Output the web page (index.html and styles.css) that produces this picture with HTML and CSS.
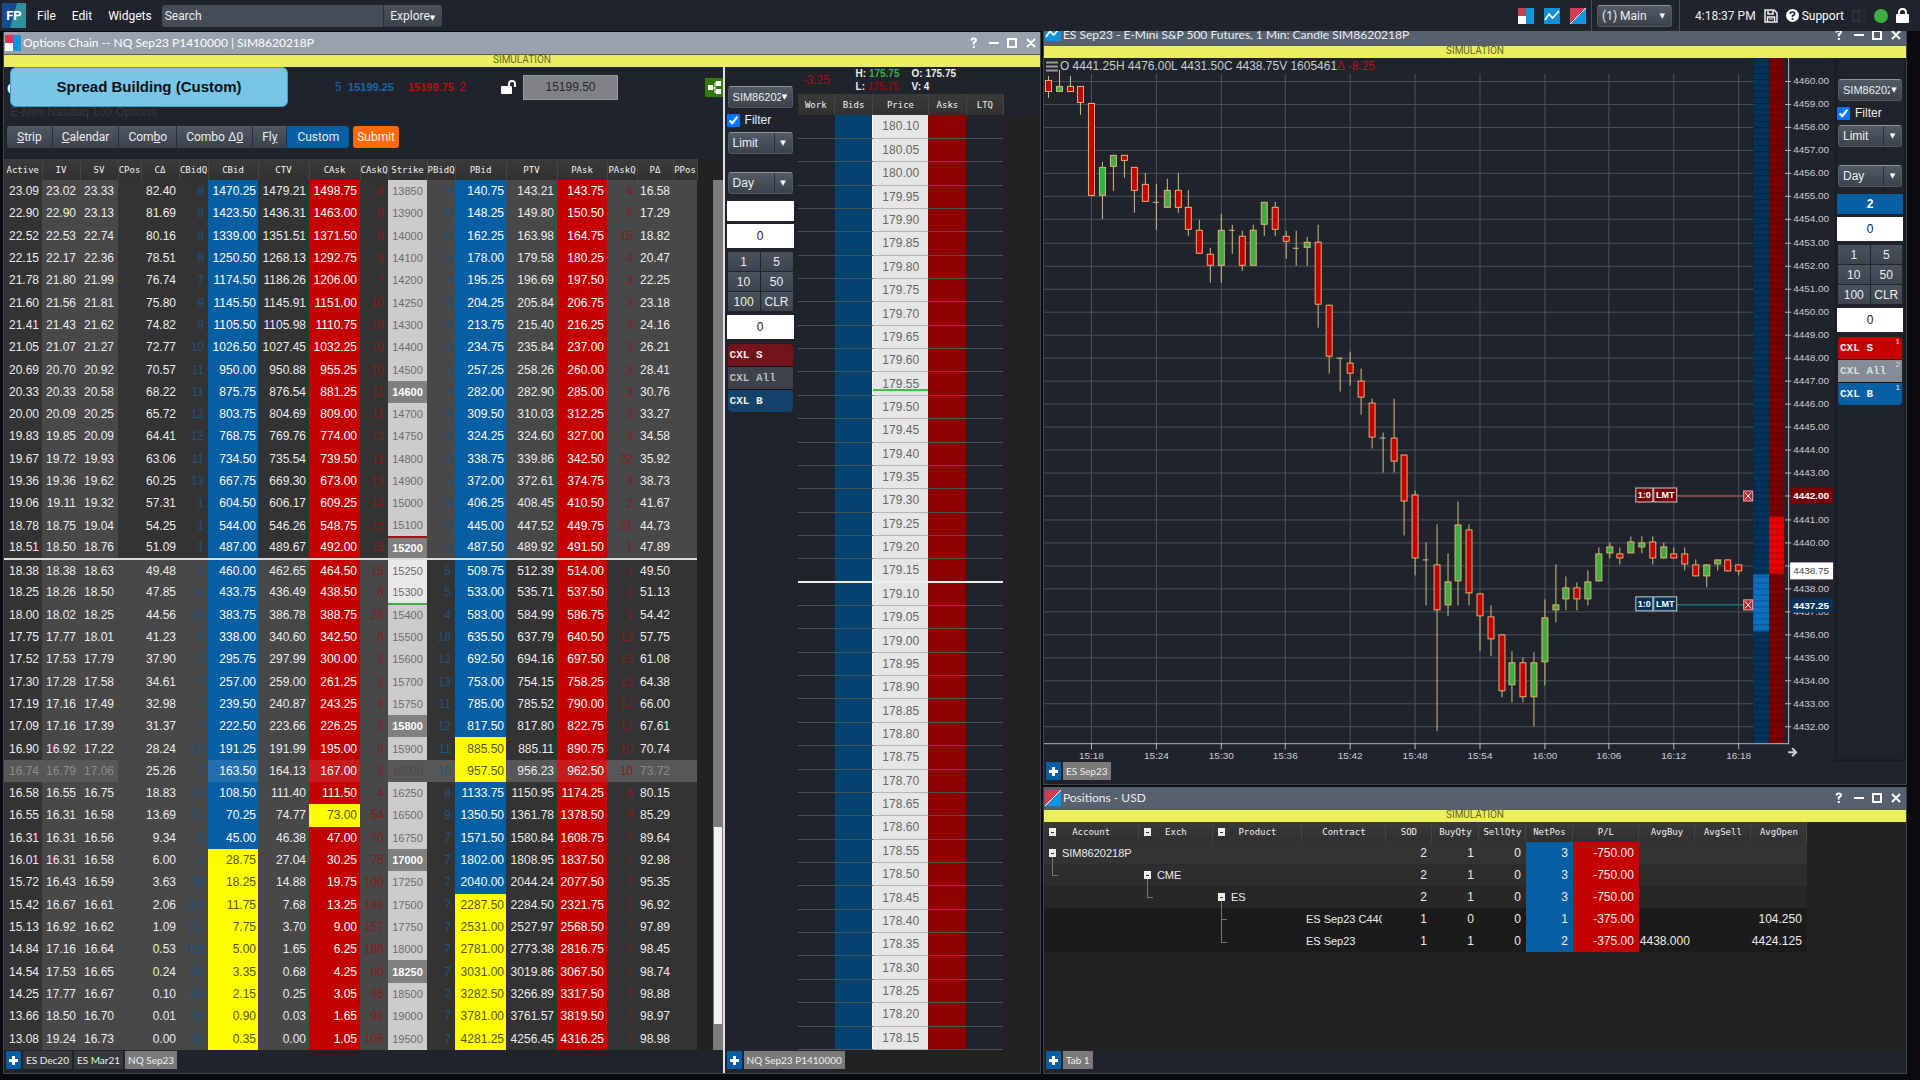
FILE: index.html
```html
<!DOCTYPE html>
<html lang="en">
<head>
<meta charset="utf-8">
<title>Trading workspace</title>
<link rel="stylesheet" href="styles.css">
</head>
<body>
<svg class="defs" width="0" height="0" aria-hidden="true">
  <symbol id="i-chain" viewBox="0 0 16 16"><path fill="#fff" d="M0 0h16v16H0z"/><path fill="#d33b52" d="M0 0h8v8H0z"/><path fill="#0f96dc" d="M8 0h8v16H8z"/></symbol>
  <symbol id="i-chart" viewBox="0 0 16 16"><path fill="#0f8fd6" d="M0 0h16v16H0z"/><path fill="none" stroke="#fff" stroke-width="1.6" d="M1 12l4-6 3.500 4L15 3"/></symbol>
  <symbol id="i-pos" viewBox="0 0 16 16"><path fill="#0f96dc" d="M0 0h16v16H0z"/><path fill="#d33b52" d="M0 0h16L0 16z"/><path stroke="#fff" d="M0 16L16 0"/></symbol>
  <symbol id="i-win" viewBox="0 0 66 12"><path fill="none" stroke="#fff" stroke-width="2" d="M1.500 3.500q0-2 2.300-2t2.200 1.800q0 1.200-2.200 2.200v2M3.800 9v2M19 6h10M38 2h8v8h-8zM57 2l8 8M65 2l-8 8"/></symbol>
</svg>

<header class="topbar">
  <svg class="logo" viewBox="0 0 24 25"><path fill="#174a92" d="M0 0h24v25H0z"/><path fill="#2f8f9c" d="M15 0h9v25H8z"/><text x="12" y="17" text-anchor="middle">FP</text></svg>
  <nav class="menu"><a href="#">File</a><a href="#">Edit</a><a href="#">Widgets</a></nav>
  <div class="search"><input type="text" placeholder="Search" aria-label="Search"><button type="button">Explore<span class="caret">▼</span></button></div>
  <div class="quick">
    <svg class="ico16"><use href="#i-chain"/></svg><svg class="ico16"><use href="#i-chart"/></svg><svg class="ico16"><use href="#i-pos"/></svg>
  </div>
  <div class="ws"><div class="pick main"><select aria-label="Workspace"><option>(1) Main</option></select><span class="caret">▼</span></div></div>
  <div class="status">
    <time>4:18:37 PM</time>
    <svg width="14" height="14" viewBox="0 0 14 14"><path fill="none" stroke="#eee" stroke-width="1.500" d="M1 1h9l3 3v9H1zM4 1v4h5V1M3.500 13V8h7v5"/><path stroke="#eee" d="M5 10h4"/></svg>
    <a href="#" class="support"><svg width="13" height="13" viewBox="0 0 13 13"><circle cx="6.500" cy="6.500" r="6.500" fill="#fff"/><path fill="none" stroke="#20232b" stroke-width="1.700" d="M4.300 5q0-2 2.200-2t2.200 1.800q0 1-2.200 2V8M6.500 9v1.700"/></svg>Support</a>
    <svg width="14" height="14" viewBox="0 0 14 14"><path fill="#2c2f33" d="M0 1l8-1v14l-8-1z"/><path fill="none" stroke="#2c2f33" d="M8 2h5v10H8"/><path stroke="#1d2025" stroke-width="1.500" d="M2 4l4 6M6 4l-4 6"/></svg>
    <svg width="14" height="14" viewBox="0 0 14 14"><circle cx="7" cy="7" r="7" fill="#3cb043"/></svg>
    <svg width="13" height="15" viewBox="0 0 13 15"><rect y="6" width="13" height="9" rx="1" fill="#fff"/><path fill="none" stroke="#fff" stroke-width="2" d="M3 7V4.500q0-3.500 3.500-3.500T10 4.500V7"/></svg>
  </div>
</header>

<main class="desk">
  <section class="panel left">
    <div class="title light"><svg class="ico16"><use href="#i-chain"/></svg><h2>Options Chain -- NQ Sep23 P1410000 | SIM8620218P</h2><svg class="win"><use href="#i-win"/></svg></div>
    <div class="sim">SIMULATION</div>
    <div class="split">
      <div class="chain">
        <div class="chainhead">
          <div class="quoteline">
            <span class="big">C</span>
            <span class="callout">Spread Building (Custom)</span>
            <span class="bid"><i>5</i> <b>15199.25</b></span>
            <span class="ask"><b>15199.75</b> <i>2</i></span>
            <svg class="unlock" width="16" height="14" viewBox="0 0 16 14"><rect y="6" width="11" height="8" rx="1" fill="#fff"/><path fill="none" stroke="#fff" stroke-width="2" d="M8 7V4q0-3 3-3t3 3v3"/></svg>
            <input class="last" type="text" value="15199.50" aria-label="Underlying price">
            <svg class="link" width="18" height="19" viewBox="0 0 18 19"><path fill="#2f7a0b" d="M0 0h18v19H0z"/><path stroke="#fff" d="M5 10h5M10 5v10M10 5h3M10 14h3"/><path fill="#fff" d="M3 7h5v5H3zM11 3h5v5h-5zM11 11h5v5h-5z"/></svg>
          </div>
          <div class="desc">E-Mini Nasdaq 100 Options</div>
          <div class="modes">
            <button type="button"><u>S</u>trip</button><button type="button"><u>C</u>alendar</button><button type="button">Com<u>b</u>o</button><button type="button">Combo Δ<u>0</u></button><button type="button">Fl<u>y</u></button><button type="button" class="on">Custom</button><button type="button" class="submit">Submit</button>
          </div>
        </div>
        <div class="gridwrap">
          <table class="options" id="options"></table>
          <div class="scroll"><div class="thumb"></div></div>
        </div>
        <div class="tabs"><button type="button" class="add" aria-label="Add tab"></button><button type="button">ES Dec20</button><button type="button">ES Mar21</button><button type="button" class="cur">NQ Sep23</button></div>
      </div>
      <div class="dom">
        <div class="dombody">
          <div class="ticket" data-qty="" data-live=""></div>
          <div class="ladderwrap">
            <div class="stats"><span class="chg">-3.25</span><span>H: <em class="up">175.75</em></span><span>O: 175.75</span><span>L: <em class="dn">175.75</em></span><span>V: 4</span></div>
            <table class="ladder" id="ladder"></table>
          </div>
        </div>
        <div class="tabs"><button type="button" class="add" aria-label="Add tab"></button><button type="button" class="cur">NQ Sep23 P1410000</button></div>
      </div>
    </div>
  </section>

  <div class="right">
    <section class="panel chartp">
      <div class="title cut"><svg class="ico16"><use href="#i-chart"/></svg><h2>ES Sep23 - E-Mini S&amp;P 500 Futures, 1 Min: Candle SIM8620218P</h2><svg class="win"><use href="#i-win"/></svg></div>
      <div class="sim">SIMULATION</div>
      <div class="chartbody">
        <svg id="chart" class="chart" viewBox="1044 58 792 703" role="img" aria-label="ES Sep23 candles"></svg>
        <div class="ticket live" data-qty="2" data-live="1"></div>
      </div>
      <div class="tabs"><button type="button" class="add" aria-label="Add tab"></button><button type="button" class="cur">ES Sep23</button></div>
    </section>
    <section class="panel posp">
      <div class="title"><svg class="ico16"><use href="#i-pos"/></svg><h2>Positions - USD</h2><svg class="win"><use href="#i-win"/></svg></div>
      <div class="sim">SIMULATION</div>
      <div class="posbody">
        <table class="positions">
          <colgroup><col class="c95"><col class="c74"><col class="c89"><col class="c84"><col class="c46"><col class="c47"><col class="c47"><col class="c47"><col class="c66"><col class="c56"><col class="c56"><col class="c56"></colgroup>
          <thead><tr><th><i class="tg"></i>Account</th><th><i class="tg"></i>Exch</th><th><i class="tg"></i>Product</th><th>Contract</th><th>SOD</th><th>BuyQty</th><th>SellQty</th><th>NetPos</th><th>P/L</th><th>AvgBuy</th><th>AvgSell</th><th>AvgOpen</th></tr></thead>
          <tbody>
            <tr class="l1"><td class="t" colspan="2"><i class="tg tree"></i>SIM8620218P</td><td></td><td></td><td>2</td><td>1</td><td>0</td><td class="net">3</td><td class="pl">-750.00</td><td></td><td></td><td></td></tr>
            <tr class="l2"><td></td><td class="t"><i class="tg tree"></i>CME</td><td></td><td></td><td>2</td><td>1</td><td>0</td><td class="net">3</td><td class="pl">-750.00</td><td></td><td></td><td></td></tr>
            <tr class="l3"><td></td><td></td><td class="t"><i class="tg tree two"></i>ES</td><td></td><td>2</td><td>1</td><td>0</td><td class="net">3</td><td class="pl">-750.00</td><td></td><td></td><td></td></tr>
            <tr class="l4"><td></td><td></td><td></td><td class="con"><div>ES Sep23 C4400</div></td><td>1</td><td>0</td><td>0</td><td class="net">1</td><td class="pl">-375.00</td><td></td><td></td><td>104.250</td></tr>
            <tr class="l4"><td></td><td></td><td></td><td class="con"><div>ES Sep23</div></td><td>1</td><td>1</td><td>0</td><td class="net">2</td><td class="pl">-375.00</td><td>4438.000</td><td></td><td>4424.125</td></tr>
          </tbody>
        </table>
      </div>
      <div class="tabs"><button type="button" class="add" aria-label="Add tab"></button><button type="button" class="cur">Tab 1</button></div>
    </section>
  </div>
</main>
<script src="app.js"></script>
</body>
</html>
```
FILE: styles.css
```css
* { box-sizing: border-box; }
body { margin: 0; min-height: 100vh; display: flex; flex-direction: column; background: #0a0b0e; color: #eee; font: 12px/16px Roboto, "Liberation Sans", sans-serif; }
button, input, select { font: inherit; color: inherit; margin: 0; border-radius: 0; }
button { cursor: pointer; }
h2 { margin: 0; }
.defs { position: absolute; }
.caret { font: 7px/10px "DejaVu Sans", sans-serif; color: #fff; }
.ico16 { width: 16px; height: 16px; flex: none; }

.topbar { height: 31px; display: flex; align-items: center; background: #20232b; padding-left: 2px; padding-right: 11px; }
.logo { width: 24px; height: 25px; }
.logo text { font: bold 13px Roboto, sans-serif; fill: #fff; }
.menu { display: flex; gap: 16px; padding: 0 10px 0 11px; }
.menu a, .support { color: #fff; text-decoration: none; }
.search { display: flex; width: 280px; height: 22px; }
.search input { flex: 1; min-width: 0; border: 0; padding: 0 3px; background: #454b57; border-radius: 3px 0 0 3px; }
.search input::placeholder { color: #eee; opacity: 1; }
.search button { width: 59px; padding: 0; border: 0; border-left: 1px solid #2a2e36; background: linear-gradient(#4a515d, #3c424d); border-radius: 0 3px 3px 0; }
.quick { margin-left: auto; display: flex; gap: 10px; padding-right: 5px; }
.ws { height: 31px; display: flex; align-items: center; padding: 0 7px 0 5px; border: solid #4a4d54; border-width: 0 1px; }
.pick { display: grid; grid-template-columns: 1fr 18px; align-items: center; height: 22px; background: linear-gradient(#525a66, #3b424d); border: 1px solid #4f5763; border-top-color: #8b929c; border-radius: 3px; overflow: hidden; }
.pick select { grid-area: 1 / 1 / 2 / 3; width: 100%; height: 20px; appearance: none; background: none; border: 0; padding: 0 16px 0 4px; outline: 0; }
.pick .caret { grid-area: 1 / 2; text-align: center; pointer-events: none; }
.pick.acct { grid-template-columns: 1fr 14px; font-size: 11px; }
.pick.acct select { padding: 0 11px 0 4px; }
.pick.sep .caret { border-left: 1px solid #2b2f37; line-height: 20px; }
.main { width: 75px; }
.status { display: flex; align-items: center; gap: 8px; padding-left: 15px; }
.support { display: flex; align-items: center; gap: 3px; }

.desk { flex: 1; display: flex; gap: 2px; padding: 0 13px 6px 3px; }
.panel { display: flex; flex-direction: column; background: #20232b; border: 1px solid #3f434b; border-top: 0; }
.left { flex: 1037 1 0; margin-top: 1px; min-width: 0; }
.right { flex: 865 1 0; display: flex; flex-direction: column; gap: 2px; min-width: 0; }
.title { height: 22px; display: flex; align-items: center; gap: 2px; padding: 0 5px 0 1px; background: #56606e; }
.title h2 { flex: 1; font: 12px/20px Lato, sans-serif; white-space: nowrap; }
.left .title { padding-right: 4px; }
.left .title h2 { color: #fff; }
.light { background: #98a1ad; }
.win { width: 66px; height: 12px; overflow: visible; }
.title.cut { height: 14px; align-items: flex-end; overflow: hidden; }
.cut .ico16 { margin-bottom: 4px; }
.cut .win { margin-bottom: 4px; }
.sim { height: 13px; border: solid #57604a; border-width: 1px 0 0; background: #ebef5d; color: #66672f; font: 10px/10px Roboto, sans-serif; text-align: center; }

.split { flex: 1; display: flex; }
.chain { flex: 720 1 0; min-width: 0; display: flex; flex-direction: column; border-right: 2px solid #e0e0e0; }
.dom { flex: 316 1 0; min-width: 0; display: flex; flex-direction: column; }
.chainhead { height: 92px; padding-left: 3px; }
.quoteline { display: grid; grid-template-columns: 328px 70px 96px 22px 95px 1fr; height: 38px; align-items: center; font-family: "Liberation Sans", sans-serif; }
.big { grid-area: 1 / 1; font: bold 16px Lato, sans-serif; color: #fff; }
.callout { grid-area: 1 / 1; width: 278px; height: 40px; margin-left: 3px; border: 1px solid #31a3d6; border-radius: 6px; background: #78c5e8; color: #0b1015; font: bold 15px/38px "Liberation Sans", sans-serif; text-align: center; z-index: 1; }
.quoteline i { font-style: normal; margin-right: 3px; }
.quoteline b { font-size: 11px; }
.bid { color: #1565ab; }
.ask { color: #c40a0a; padding-left: 3px; }
.ask i { margin-left: 2px; }
.last { height: 25px; border: 1px solid #9a9ca0; background: #808287; color: #26282c; text-align: center; font: 12px "Liberation Sans", sans-serif; }
.link { justify-self: end; }
.desc { height: 14px; padding-left: 3px; color: #35383e; font: 12px/14px "Liberation Sans", sans-serif; margin: 0 0 7px; }
.modes { display: flex; height: 22px; }
.modes button { padding: 0 9px; border: 0; border-right: 1px solid #2c3038; background: linear-gradient(#505864, #3a414c); white-space: nowrap; }
.modes button:first-child { border-radius: 3px 0 0 3px; padding: 0 10px; }
.modes .on { background: #065ea3; border-radius: 0 3px 3px 0; border: 0; padding: 0 10px; }
.modes .submit { background: #ff6a00; border: 0; border-radius: 3px; margin-left: 4px; padding: 0 4px; }

.gridwrap { flex: 1; display: flex; background: #222; }
.options { flex: 1; table-layout: fixed; width: 100%; border-collapse: collapse; margin-right: 15px; }
table { font: 12px/14px "Liberation Sans", sans-serif; }
th { height: 21px; padding: 0; background: linear-gradient(#3a3a3a, #303030); border-right: 1px solid #444; font: 9px/12px "DejaVu Sans Mono", monospace; color: #f2f2f2; white-space: nowrap; }
.options th { overflow: hidden; }
.options td { padding: 0 3px 0 0; height: 22px; text-align: right; background: #333; }
.options .up-row .p, .options .dn-row .c, .options .v { background: #484848; }
.options td.q { padding-right: 4px; }
.options td.v { padding-right: 4px; }
td.cq, td.pq { color: #21527e; }
td.ca, td.pa { color: #861c1f; }
.options td.b { background: #065ea3; color: #fff; padding-right: 2px; }
.options td.a { background: #c40000; color: #fff; }
.options td.y { background: #ff0; color: #555500; }
.options td.k { background: #ccc; color: #6b6b6b; text-align: center; padding: 0; font-size: 11px; }
.options td.k.w { background: #e9e9e9; }
.options td.k.m { background: #808080; color: #fff; font-weight: bold; }
.options tr.div td { border-bottom: 2px solid #ddd; }
.options tr.div td.k { border-top: 2px solid #9b1616; }
.options td.k.g { border-bottom: 2px solid #45a845; }
.options tr.hl td { background: #575757; }
.options tr.hl td.b { background: #236eac; }
.options tr.hl td.a { background: #c81c1c; }
.options tr.hl td.y { background: #ff0; }
.options tr.hl td.dim { color: #8c8c8c; }
.options tr.hl td.k { color: #4a4a4a; }
.scroll { width: 10px; margin-top: 21px; background: #7b7b7b; padding: 0 1px; display: grid; grid-template-rows: 647fr 197fr 26fr; }
.thumb { grid-row: 2; background: #f2f2f2; }

.tabs { height: 23px; display: flex; gap: 2px; padding: 1px 0 4px 2px; }
.tabs button { height: 18px; padding: 0 3px; border: 0; background: #36383b; font: 10px/18px Lato, sans-serif; white-space: nowrap; }
.tabs .cur { background: #7a7a7a; }
.tabs .add { width: 15px; padding: 0; background: linear-gradient(#fff, #fff) center / 9px 3px no-repeat, linear-gradient(#fff, #fff) center / 3px 9px no-repeat, #065ea3; }

.dombody { flex: 1; display: flex; }
.ticket { width: 73px; flex: none; padding: 19px 4px 0 2px; font-family: "Liberation Sans", sans-serif; display: flex; flex-direction: column; }
.ticket.live { padding-top: 21px; width: 71px; height: 703px; padding-right: 3px; box-shadow: inset 0 0 3px #0c0d10; }
.ticket .pick { margin: 0 1px; }
.check { display: flex; align-items: center; gap: 5px; height: 12px; margin: 6px 0; }
.check input { width: 13px; height: 13px; }
.pick.tif { margin-top: 18px; }
.ticket > input { width: 100%; height: 24px; border: 0; background: #fff; color: #222; text-align: center; margin-bottom: 4px; }
.ticket > input.pos { height: 20px; margin: 7px 0 3px; }
.live > input.pos { background: #065ea3; color: #fff; font-weight: bold; }
.keys { display: grid; grid-template-columns: 1fr 1fr; grid-auto-rows: 19px; gap: 1px; margin: 0 1px 4px; }
.keys button { border: 0; padding: 0; background: linear-gradient(#49515d, #3d444f); }
.cxl { display: grid; grid-auto-rows: 22px; gap: 1px; margin: 1px 1px 0; border-radius: 4px; overflow: hidden; background: #101216; }
.cxl button { display: flex; justify-content: space-between; border: 0; padding: 0 2px; font: bold 11px/22px "Liberation Mono", monospace; text-align: left; white-space: pre; }
.cxl sup { font: 8px/10px "Liberation Sans", sans-serif; }
.cxl .s { background: #73131a; } .cxl .n { background: #3d424b; color: #bbb; } .cxl .y { background: #13436b; }
.live .s { background: #c40000; } .live .n { background: #848c98; color: #ddd; } .live .y { background: #065ea3; }

.ladderwrap { flex: 1; display: flex; flex-direction: column; padding-right: 2px; }
.stats { height: 27px; display: grid; grid-template-columns: 58px 56px 1fr; grid-template-rows: 13px 13px; align-items: center; font: bold 10px/13px "Liberation Sans", sans-serif; white-space: nowrap; }
.stats em { font-style: normal; }
.stats .up { color: #3fae47; } .stats .dn { color: #8c0a10; }
.stats .chg { grid-row: 1 / 3; padding-left: 5px; font: 12px "Liberation Sans", sans-serif; color: #a30d14; }
.ladder { flex: 1; table-layout: fixed; border-collapse: collapse; margin-right: 34px; box-shadow: 34px 21px 0 #222; }
.ladder td { padding: 0; height: 22px; text-align: center; border-bottom: 1px solid #4b5058; }
.ladder .lb { background: #04426f; } .ladder .la { background: #8f0000; }
.ladder .lp { background: #e6e6e6; color: #666; border-bottom-color: #b5b5b5; border-left: 1px solid #fff; }
.ladder .lt .lp { background: linear-gradient(#3fc347, #3fc347) 0 17px / 100% 2px no-repeat #e6e6e6; }
.ladder .mid td { border-bottom: 2px solid #eee; }

.chartbody { display: flex; align-items: flex-start; }
.chart { flex: 1; min-width: 0; display: block; }
.chart text { font: 10px "Liberation Sans", sans-serif; fill: #c9ccd2; }
.chart .ohlc { font-size: 12px; }
.chart .red { fill: #b0141b; }
.chart .hot { fill: #fff; font-weight: bold; }
.chart .now { fill: #444; }
.chart .ord { fill: #fff; font-weight: bold; font-size: 9px; }

.posp { flex: 1; }
.posbody { flex: 1; background: #222; }
.positions { table-layout: fixed; border-collapse: collapse; width: 763px; }
.c95 { width: 95px; } .c74 { width: 74px; } .c89 { width: 89px; } .c84 { width: 84px; } .c46 { width: 46px; } .c47 { width: 47px; } .c66 { width: 66px; } .c56 { width: 56px; }
.positions th { position: relative; height: 20px; }
.positions td { height: 22px; padding: 0 5px 0 0; text-align: right; white-space: nowrap; }
.positions .t { text-align: left; font-size: 11px; padding-left: 18px; position: relative; }
.positions .con { padding: 0 4px; text-align: left; font-size: 11px; }
.con div { overflow: hidden; }
.l1 { background: #333; } .l2 { background: #2d2d2d; } .l3 { background: #272727; } .l4 { background: #1b1b1b; }
.positions .net { background: #065ea3; } .positions .pl { background: #c40000; }
.tg { position: absolute; left: 5px; top: 50%; width: 7px; height: 8px; margin-top: -4px; background: linear-gradient(#333, #333) center / 3px 1px no-repeat #eee; }
.tree::after, .two::before { content: ""; position: absolute; left: 3px; top: 8px; width: 5px; height: 18px; border: solid #777; border-width: 0 0 1px 1px; }
.two::after { height: 41px; }
```
FILE: app.js
```js
// Option chain: Active IV SV CΔ CBidQ CBid CTV CAsk CAskQ Strike PBidQ PBid PTV PAsk PAskQ PΔ
const chain = `23.09 23.02 23.33 82.40 8 1470.25 1479.21 1498.75 8 13850 9 140.75 143.21 143.75 4 16.58
22.90 22.90 23.13 81.69 8 1423.50 1436.31 1463.00 8 13900 5 148.25 149.80 150.50 4 17.29
22.52 22.53 22.74 80.16 8 1339.00 1351.51 1371.50 8 14000 5 162.25 163.98 164.75 15 18.82
22.15 22.17 22.36 78.51 8 1250.50 1268.13 1292.75 8 14100 5 178.00 179.58 180.25 4 20.47
21.78 21.80 21.99 76.74 7 1174.50 1186.26 1206.00 7 14200 4 195.25 196.69 197.50 3 22.25
21.60 21.56 21.81 75.80 9 1145.50 1145.91 1151.00 10 14250 4 204.25 205.84 206.75 3 23.18
21.41 21.43 21.62 74.82 9 1105.50 1105.98 1110.75 10 14300 4 213.75 215.40 216.25 3 24.16
21.05 21.07 21.27 72.77 10 1026.50 1027.45 1032.25 10 14400 4 234.75 235.84 237.00 3 26.21
20.69 20.70 20.92 70.57 11 950.00 950.88 955.25 10 14500 4 257.25 258.26 260.00 3 28.41
20.33 20.33 20.58 68.22 11 875.75 876.54 881.25 11 14600 4 282.00 282.90 285.00 3 30.76
20.00 20.09 20.25 65.72 12 803.75 804.69 809.00 11 14700 4 309.50 310.03 312.25 3 33.27
19.83 19.85 20.09 64.41 12 768.75 769.76 774.00 12 14750 4 324.25 324.60 327.00 3 34.58
19.67 19.72 19.93 63.06 11 734.50 735.54 739.50 11 14800 4 338.75 339.86 342.50 22 35.92
19.36 19.36 19.62 60.25 13 667.75 669.30 673.00 13 14900 4 372.00 372.61 374.75 3 38.73
19.06 19.11 19.32 57.31 1 604.50 606.17 609.25 14 15000 6 406.25 408.45 410.50 2 41.67
18.78 18.75 19.04 54.25 1 544.00 546.26 548.75 15 15100 6 445.00 447.52 449.75 21 44.73
18.51 18.50 18.76 51.09 1 487.00 489.67 492.00 15 15200 5 487.50 489.92 491.50 1 47.89
18.38 18.38 18.63 49.48 1 460.00 462.65 464.50 15 15250 5 509.75 512.39 514.00 1 49.50
18.25 18.26 18.50 47.85 6 433.75 436.49 438.50 6 15300 5 533.00 535.71 537.50 1 51.13
18.00 18.02 18.25 44.56 23 383.75 386.78 388.75 23 15400 4 583.00 584.99 586.75 1 54.42
17.75 17.77 18.01 41.23 6 338.00 340.60 342.50 6 15500 18 635.50 637.79 640.50 13 57.75
17.52 17.53 17.79 37.90 4 295.75 297.99 300.00 3 15600 12 692.50 694.16 697.50 13 61.08
17.30 17.28 17.58 34.61 7 257.00 259.00 261.25 3 15700 13 753.00 754.15 758.25 13 64.38
17.19 17.16 17.49 32.98 7 239.50 240.87 243.25 3 15750 11 785.00 785.52 790.00 12 66.00
17.09 17.16 17.39 31.37 7 222.50 223.66 226.25 3 15800 12 817.50 817.80 822.75 12 67.61
16.90 16.92 17.22 28.24 13 191.25 191.99 195.00 3 15900 11 885.50 885.11 890.75 10 70.74
16.74 16.79 17.06 25.26 7 163.50 164.13 167.00 3 16000 10 957.50 956.23 962.50 10 73.72
16.58 16.55 16.75 18.83 19 108.50 111.40 111.50 4 16250 8 1133.75 1150.95 1174.25 6 80.15
16.55 16.31 16.58 13.69 21 70.25 74.77 73.00 54 16500 9 1350.50 1361.78 1378.50 9 85.29
16.31 16.31 16.56 9.34 5 45.00 46.38 47.00 70 16750 7 1571.50 1580.84 1608.75 7 89.64
16.01 16.31 16.58 6.00 1 28.75 27.04 30.25 75 17000 7 1802.00 1808.95 1837.50 7 92.98
15.72 16.43 16.59 3.63 38 18.25 14.88 19.75 100 17250 7 2040.00 2044.24 2077.50 7 95.35
15.42 16.67 16.61 2.06 128 11.75 7.68 13.25 143 17500 7 2287.50 2284.50 2321.75 7 96.92
15.13 16.92 16.62 1.09 111 7.75 3.70 9.00 157 17750 7 2531.00 2527.97 2568.50 7 97.89
14.84 17.16 16.64 0.53 151 5.00 1.65 6.25 166 18000 7 2781.00 2773.38 2816.75 7 98.45
14.54 17.53 16.65 0.24 45 3.35 0.68 4.25 80 18250 7 3031.00 3019.86 3067.50 7 98.74
14.25 17.77 16.67 0.10 84 2.15 0.25 3.05 85 18500 7 3282.50 3266.89 3317.50 7 98.88
13.66 18.50 16.70 0.01 65 0.90 0.03 1.65 92 19000 7 3781.00 3761.57 3819.50 7 98.97
13.08 19.24 16.73 0.00 45 0.35 0.00 1.05 105 19500 7 4281.25 4256.45 4316.25 7 98.98`
  .split("\n").map(r => r.split(" "));

const heads = ["Active", "IV", "SV", "CPos", "CΔ", "CBidQ", "CBid", "CTV", "CAsk", "CAskQ", "Strike", "PBidQ", "PBid", "PTV", "PAsk", "PAskQ", "PΔ", "PPos"];
const widths = [38, 38, 38, 23, 38, 29, 50, 51, 51, 28, 39, 28, 51, 51, 50, 30, 36, 24];
const td = (cls, v) => `<td class="${cls}">${v}</td>`;
document.getElementById("options").innerHTML =
  "<colgroup>" + widths.map(w => `<col style="width:${w}px">`).join("") + "</colgroup><thead><tr>" +
  heads.map(h => `<th>${h}</th>`).join("") + "</tr></thead><tbody>" +
  chain.map(r => {
    const k = +r[9];
    const row = (k <= 15200 ? "up-row" : "dn-row") + (k === 15200 ? " div" : "") + (k === 16000 ? " hl" : "");
    let kc = "k";
    if ([14600, 15200, 15800, 17000, 18250].includes(k)) kc += " m";
    if (k === 15250 || k === 15300) kc += " w";
    if (k === 15300) kc += " g";
    const cb = k >= 17000 ? "b y" : "b";
    const pb = k === 15900 || k === 16000 || k >= 17500 ? "b y" : "b";
    const ca = k === 16500 ? "a y" : "a";
    return `<tr class="${row}">` + td("dim", r[0]) + td("v dim", r[1]) + td("v dim", r[2]) + td("c", "") + td("c", r[3]) +
      td("c q cq", r[4]) + td(cb, r[5]) + td("c", r[6]) + td(ca, r[7]) + td("c q ca", r[8]) + td(kc, r[9]) +
      td("p q pq", r[10]) + td(pb, r[11]) + td("p", r[12]) + td("a", r[13]) + td("p q pa", r[14]) + td("p dim", r[15]) + td("p", "") + "</tr>";
  }).join("") + "</tbody>";

// Price ladder, 0.05 per row
let rows = "";
for (let i = 0; i < 40; i++) {
  const price = ((18010 - i * 5) / 100).toFixed(2);
  const cls = price === "179.55" ? "lt" : price === "179.15" ? "mid" : "";
  rows += `<tr class="${cls}"><td></td><td class="lb"></td><td class="lp">${price}</td><td class="la"></td><td></td></tr>`;
}
document.getElementById("ladder").innerHTML =
  "<colgroup>" + [37, 38, 56, 38, 37].map(w => `<col style="width:${w}px">`).join("") +
  "</colgroup><thead><tr><th>Work</th><th>Bids</th><th>Price</th><th>Asks</th><th>LTQ</th></tr></thead><tbody>" + rows + "</tbody>";

// Order tickets
document.querySelectorAll(".ticket").forEach(t => {
  const live = t.dataset.live;
  const pick = (label, v, cls) => `<div class="pick ${cls}"><select aria-label="${label}"><option>${v}</option></select><span class="caret">▼</span></div>`;
  const sup = n => live ? `<sup>${n}</sup>` : "";
  t.innerHTML = pick("Account", "SIM8620218P", "acct") +
    `<label class="check"><input type="checkbox" checked>Filter</label>` +
    pick("Order type", "Limit", "sep") + pick("Time in force", "Day", "sep tif") +
    `<input class="pos" type="text" value="${t.dataset.qty}" aria-label="Position"><input type="text" value="0" aria-label="Quantity">` +
    `<div class="keys">${["1", "5", "10", "50", "100", "CLR"].map(k => `<button type="button">${k}</button>`).join("")}</div>` +
    `<input type="text" value="0" aria-label="Offset">` +
    `<div class="cxl"><button type="button" class="s">CXL S${sup(1)}</button><button type="button" class="n">CXL All${sup(2)}</button><button type="button" class="y">CXL B${sup(1)}</button></div>`;
});

// Candles from 15:14, one a minute: colour, body top, body bottom, wick top, wick bottom
const candles = `R80,92,76,98 G86,92,70,92 R86,92,76,92 R86,103,86,115 R103,196,103,196 G167,196,162,219 G155,167,155,191 R155,161,155,178 R167,191,167,213 R184,202,173,202 D202,202,184,230 G190,208,179,208 R190,208,173,213 R207,230,190,236 R230,254,220,254 R254,266,248,283 G230,266,214,283 D230,230,225,254 R236,266,231,271 G230,266,225,266 G202,225,202,236 R207,230,202,236 R236,242,231,259 D248,248,231,266 G242,248,237,266 R242,305,225,328 R305,357,305,374 D358,358,358,392 R363,374,352,386 R381,398,369,415 R403,438,399,449 D438,438,433,473 R438,462,399,473 R455,502,455,536 R495,559,491,576 D560,560,543,606 R565,611,525,732 G582,606,554,617 G525,582,502,606 R530,594,525,606 R594,617,594,652 R617,640,606,657 R635,692,635,698 G663,686,652,703 R663,698,658,703 G663,698,653,727 G618,663,600,686 G605,611,565,623 G588,600,577,611 R588,600,583,611 G582,600,571,606 G554,582,548,582 G547,554,543,559 R554,559,548,565 G542,554,537,554 G543,548,537,554 R542,559,537,565 G547,559,543,559 R554,559,548,559 R554,565,548,571 R565,577,560,577 G565,577,565,588 G560,565,560,571 R560,572,560,572 R565,572,565,576`.split(" ");
const rect = (x, y, w, h, f, extra = "") => `<rect x="${x}" y="${y}" width="${w}" height="${h}" fill="${f}" ${extra}/>`;
const line = (x1, y1, x2, y2, s) => `<path d="M${x1} ${y1}L${x2} ${y2}" stroke="${s}"/>`;
const text = (x, y, t, cls = "", anchor = "start") => `<text x="${x}" y="${y}" class="${cls}" text-anchor="${anchor}">${t}</text>`;
let g = "";
const priceY = p => Math.round(81 + (4460 - p) * 23.08) + .5;
for (let p = 4460; p >= 4432; p--) {
  const y = priceY(p);
  g += line(1044, y, 1754, y, "#4b525e") + line(1786, y, 1792, y, "#b9bdc6");
  g += text(1794, y + 3, p + ".00");
}
for (let i = 0; i < 11; i++) {
  const x = Math.round(1091 + i * 64.8) + .5, m = 18 + i * 6;
  g += line(x, 74, x, 744, "#4b525e") + line(x, 744, x, 750, "#b9bdc6");
  g += text(x, 760, (15 + Math.floor(m / 60)) + ":" + String(m % 60).padStart(2, "0"), "", "middle");
}
g += rect(1754, 58, 16, 686, "#01335c") + rect(1770, 58, 15, 686, "#780000");
g += rect(1754, 575, 16, 57, "#0d6fc2") + rect(1770, 517, 15, 57, "#e80000");
for (let y = 61; y < 744; y += 6) g += rect(1754, y, 31, 1, "#000", 'opacity=".25"');
g += line(1789.5, 58, 1789.5, 745, "#b9bdc6") + line(1044, 744.5, 1790, 744.5, "#b9bdc6");
candles.forEach((c, i) => {
  const [t, b, hi, lo] = c.slice(1).split(",").map(Number);
  const x = Math.round(1048 + i * 10.8);
  g += line(x + .5, hi, x + .5, lo, "#c9c27c");
  g += c[0] === "D" ? rect(x - 3, t, 6, 1, "#c9c27c")
    : rect(x - 2.5, t + .5, 6, Math.max(b - t - 1, 3), c[0] === "R" ? "#c40000" : "#3cae43", 'stroke="#e8b070"');
});
[[496, "#7a0005", "#c0555c"], [605, "#04335a", "#159a9a"]].forEach(([y, f, s]) => {
  g += line(1677, y + .5, 1744, y + .5, s);
  g += rect(1636.5, y - 7.5, 17, 14, f, 'stroke="#ccc"') + rect(1654.5, y - 7.5, 23, 14, f, 'stroke="#ccc"');
  g += text(1645, y + 3, "1:0", "ord", "middle") + text(1666, y + 3, "LMT", "ord", "middle");
  g += rect(1744.5, y - 4.5, 9, 10, "#b3202a", 'stroke="#f0b0b0"') + `<path d="M1746 ${y - 3}l6 7M1752 ${y - 3}l-6 7" stroke="#fff"/>`;
});
g += rect(1791, 488, 43, 16, "#780005") + text(1794, 500, "4442.00", "hot");
g += rect(1791, 563, 43, 17, "#fff") + text(1794, 575, "4438.75", "now");
g += rect(1791, 599, 43, 14, "#01335c") + text(1794, 610, "4437.25", "hot");
g += '<path d="M1789 753h7M1793 749l4 4-4 4" fill="none" stroke="#ccd0d8" stroke-width="2"/>';
g += '<path d="M1046 62.500h12M1046 66.500h12M1046 70.500h12" stroke="#999" stroke-width="2"/>';
g += `<text x="1060" y="70" class="ohlc">O 4441.25H 4476.00L 4431.50C 4438.75V 1605461<tspan class="red">Δ -8.25</tspan></text>`;
document.getElementById("chart").innerHTML = g;
```
